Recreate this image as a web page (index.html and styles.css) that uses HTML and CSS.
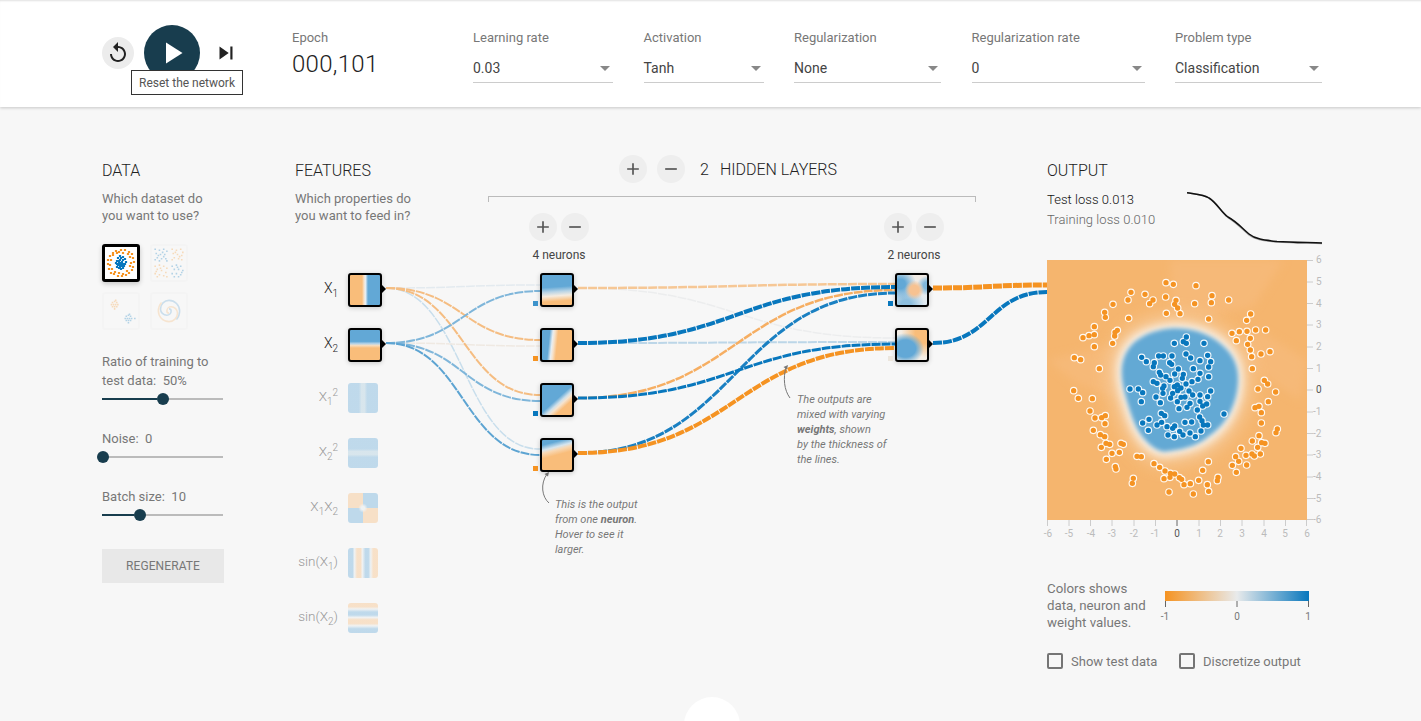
FILE: index.html
```html
<!DOCTYPE html>
<html lang="en">
<head>
<meta charset="utf-8">
<title>Neural network playground</title>
<link rel="stylesheet" href="styles.css">
</head>
<body>
<header class="top">
  <div class="controls">
    <button class="btn-reset" aria-label="Reset"><svg viewBox="0 0 24 24" width="24" height="24"><path d="M12 5V1L7 6l5 5V7c3.31 0 6 2.69 6 6s-2.69 6-6 6-6-2.69-6-6H4c0 4.42 3.58 8 8 8s8-3.58 8-8-3.58-8-8-8z"/></svg></button>
    <button class="btn-play" aria-label="Play"><svg viewBox="0 0 24 24" width="36" height="36"><path d="M8 5v14l11-7z"/></svg></button>
    <button class="btn-step" aria-label="Step"><svg viewBox="0 0 24 24" width="26" height="26"><path d="M6 18l8.5-6L6 6v12zM16 6v12h2V6h-2z"/></svg></button>
    <div class="tooltip">Reset the network</div>
  </div>
  <div class="epoch"><div class="label">Epoch</div><div class="epoch-value">000,101</div></div>
  <div class="fields">
    <div class="field f-lr"><div class="label">Learning rate</div><div class="select">0.03</div></div>
    <div class="field f-ac"><div class="label">Activation</div><div class="select">Tanh</div></div>
    <div class="field f-re"><div class="label">Regularization</div><div class="select">None</div></div>
    <div class="field f-rr"><div class="label">Regularization rate</div><div class="select">0</div></div>
    <div class="field f-re"><div class="label">Problem type</div><div class="select">Classification</div></div>
  </div>
</header>

<main class="main">
  <svg class="links" viewBox="0 0 1421 721" width="1421" height="721" fill="none">
    <g class="dash">
      <path d="M386 288C463 288 463 285 540 285" stroke="#e3eaef" stroke-width="1.5"/>
      <path d="M386 288C463 288 463 450 540 449" stroke="#c8deec" stroke-width="1.5"/>
      <path d="M386 343C463 343 463 346 540 346" stroke="#efe9e2" stroke-width="1.5"/>
      <path d="M386 288C463 288 463 340 540 340" stroke="#f5bd82" stroke-width="2"/>
      <path d="M386 288C463 288 463 395 540 395" stroke="#f5bd82" stroke-width="2"/>
      <path d="M386 343C463 343 463 291 540 291" stroke="#7fb6da" stroke-width="2"/>
      <path d="M386 343C463 343 463 401 540 401" stroke="#7fb6da" stroke-width="2"/>
      <path d="M386 343C463 343 463 455 540 455" stroke="#5da4d2" stroke-width="2"/>
      <path d="M578 288C736 288 736 338 895 338" stroke="#ecedee" stroke-width="1.5"/>
      <path d="M578 288C736 288 736 284 895 284" stroke="#f6c795" stroke-width="2.5"/>
      <path d="M578 343C736 343 736 342 895 342" stroke="#bcd6e8" stroke-width="2"/>
      <path d="M578 398C736 398 736 290 895 290" stroke="#f6ae62" stroke-width="2.5"/>
      <path d="M578 453C736 453 736 293 895 293" stroke="#1a80c2" stroke-width="3"/>
      <path d="M578 343C736 343 736 287 895 287" stroke="#0877bd" stroke-width="4"/>
      <path d="M578 398C736 398 736 344 895 344" stroke="#0877bd" stroke-width="3"/>
      <path d="M578 453C736 453 736 348 895 348" stroke="#f59322" stroke-width="4"/>
      <path d="M933 288C990 288 990 285 1047 285" stroke="#f59322" stroke-width="5"/>
      <path d="M933 343C990 343 990 292 1047 292" stroke="#0877bd" stroke-width="4"/>
    </g>
    <path class="note-line" d="M549 503C542 497 540 484 547 474"/>
    <path class="note-head" d="M549 472l-4.500 2 3.500 2.500z"/>
    <path class="note-line" d="M790 398C784 390 783 378 786 367"/>
    <path class="note-head" d="M788 365l-4.500 2 3.500 2.500z"/>
  </svg>

  <section class="col col-data">
    <h4>DATA</h4>
    <p class="sub">Which dataset do<br>you want to use?</p>
    <div class="thumbs">
      <div class="thumb selected"><svg viewBox="0 0 32 32">
        <path class="pt o" d="M16 3h0M20 3h0M24 5h0M27 7h0M28 11h0M29 15h0M28 20h0M27 23h0M24 26h0M21 28h0M17 29h0M13 29h0M9 27h0M6 26h0M4 22h0M3 17h0M3 13h0M5 9h0M8 6h0M11 4h0M14 5h0M18 6h0M23 7h0M25 10h0M26 16h0M25 19h0M22 24h0M18 27h0M14 26h0M10 25h0M7 22h0M5 18h0M6 13h0M8 8h0M12 6h0"/>
        <path class="pt b" d="M15 9h0M18 10h0M13 11h0M16 11h0M20 12h0M12 14h0M15 13h0M18 13h0M21 15h0M11 16h0M14 16h0M17 15h0M20 17h0M13 18h0M16 18h0M19 19h0M12 20h0M15 20h0M18 21h0M16 22h0M14 14h0M16 16h0M15 18h0M18 17h0M17 19h0M14 21h0M12 17h0"/>
      </svg></div>
      <div class="thumb"><svg viewBox="0 0 32 32">
        <path class="pt b" d="M3 3h0M7 4h0M11 3h0M14 5h0M4 7h0M8 8h0M12 8h0M5 11h0M9 12h0M13 12h0M3 13h0M7 14h0M14 14h0M10 6h0M6 9h0M11 10h0M19 19h0M23 18h0M27 19h0M21 22h0M25 22h0M29 23h0M19 26h0M23 26h0M27 27h0M21 29h0M25 29h0M24 20h0M28 25h0"/>
        <path class="pt o" d="M19 3h0M23 4h0M27 3h0M29 6h0M20 7h0M24 8h0M28 9h0M21 11h0M25 12h0M19 13h0M28 13h0M22 6h0M26 10h0M3 19h0M7 18h0M11 19h0M14 21h0M5 22h0M9 23h0M13 25h0M3 26h0M7 27h0M11 28h0M5 29h0M14 29h0M8 21h0M4 24h0"/>
      </svg></div>
      <div class="thumb"><svg viewBox="0 0 32 32">
        <path class="pt o" d="M8 8h0M10 7h0M12 8h0M7 10h0M9 10h0M11 10h0M13 10h0M8 12h0M10 12h0M12 12h0M10 14h0M11 6h0"/>
        <path class="pt b" d="M21 21h0M23 20h0M25 21h0M20 23h0M22 23h0M24 23h0M26 23h0M21 25h0M23 25h0M25 25h0M23 27h0M24 19h0M29 23h0"/>
      </svg></div>
      <div class="thumb"><svg viewBox="0 0 32 32" fill="none">
        <path class="spiral-b" d="M16 14a2 2 0 0 1 2 2a4 4 0 0 1-4 4a6 6 0 0 1-6-6a8 8 0 0 1 8-8a10 10 0 0 1 10 10a12 12 0 0 1-3 8"/>
        <path class="spiral-o" d="M16 18a2 2 0 0 1-2-2a4 4 0 0 1 4-4a6 6 0 0 1 6 6a8 8 0 0 1-8 8a10 10 0 0 1-10-10a12 12 0 0 1 3-8"/>
      </svg></div>
    </div>
    <div class="ctl ctl-ratio"><div class="ctl-label">Ratio of training to<br>test data:&nbsp; 50%</div><div class="slider s50"><i></i></div></div>
    <div class="ctl"><div class="ctl-label">Noise:&nbsp; 0</div><div class="slider s0"><i></i></div></div>
    <div class="ctl"><div class="ctl-label">Batch size:&nbsp; 10</div><div class="slider s31"><i></i></div></div>
    <button class="regen">REGENERATE</button>
  </section>

  <section class="col col-features">
    <h4>FEATURES</h4>
    <p class="sub">Which properties do<br>you want to feed in?</p>
    <div class="feature on"><span class="fname">X<sub>1</sub></span><div class="node h-x1"></div></div>
    <div class="feature on"><span class="fname">X<sub>2</sub></span><div class="node h-x2"></div></div>
    <div class="feature"><span class="fname">X<sub>1</sub><sup>2</sup></span><div class="fbox h-x1s"></div></div>
    <div class="feature"><span class="fname">X<sub>2</sub><sup>2</sup></span><div class="fbox h-x2s"></div></div>
    <div class="feature"><span class="fname">X<sub>1</sub>X<sub>2</sub></span><div class="fbox h-xx"></div></div>
    <div class="feature"><span class="fname">sin(X<sub>1</sub>)</span><div class="fbox h-s1"></div></div>
    <div class="feature"><span class="fname">sin(X<sub>2</sub>)</span><div class="fbox h-s2"></div></div>
  </section>

  <section class="col col-net">
    <div class="net-head">
      <button class="round" aria-label="Add layer"><svg viewBox="0 0 24 24"><path d="M19 13h-6v6h-2v-6H5v-2h6V5h2v6h6v2z"/></svg></button>
      <button class="round" aria-label="Remove layer"><svg viewBox="0 0 24 24"><path d="M19 13H5v-2h14v2z"/></svg></button>
      <span class="layer-count">2</span><span class="layer-title">HIDDEN LAYERS</span>
    </div>
    <div class="bracket"></div>
    <div class="layers">
      <div class="layer">
        <div class="layer-btns">
          <button class="round" aria-label="Add neuron"><svg viewBox="0 0 24 24"><path d="M19 13h-6v6h-2v-6H5v-2h6V5h2v6h6v2z"/></svg></button>
          <button class="round" aria-label="Remove neuron"><svg viewBox="0 0 24 24"><path d="M19 13H5v-2h14v2z"/></svg></button>
        </div>
        <div class="layer-size">4 neurons</div>
        <div class="node h-n1 bias-b1"></div>
        <div class="node h-n2 bias-o"></div>
        <div class="node h-n3 bias-b"></div>
        <div class="node h-n4 bias-o"></div>
      </div>
      <div class="layer">
        <div class="layer-btns">
          <button class="round" aria-label="Add neuron"><svg viewBox="0 0 24 24"><path d="M19 13h-6v6h-2v-6H5v-2h6V5h2v6h6v2z"/></svg></button>
          <button class="round" aria-label="Remove neuron"><svg viewBox="0 0 24 24"><path d="M19 13H5v-2h14v2z"/></svg></button>
        </div>
        <div class="layer-size">2 neurons</div>
        <div class="node h-n5 bias-b"></div>
        <div class="node h-n6 bias-g"></div>
      </div>
    </div>
    <p class="note note-neuron">This is the output<br>from one <b>neuron</b>.<br>Hover to see it<br>larger.</p>
    <p class="note note-weights">The outputs are<br>mixed with varying<br><b>weights</b>, shown<br>by the thickness of<br>the lines.</p>
  </section>

  <section class="col col-out">
    <h4>OUTPUT</h4>
    <div class="loss">
      <div class="loss-text"><div class="test">Test loss 0.013</div><div class="train">Training loss 0.010</div></div>
      <svg class="chart" viewBox="0 0 135 55" width="135" height="55" fill="none"><path class="chart-b" d="M0 2.700C8 4 17 4.500 22 8C30 13 34 22 41 27.500C50 33 55 39 62 45C68 50 76 50.500 90 52C105 53 120 53 135 53.500"/><path class="chart-a" d="M0 2.700C8 4 17 4.500 22 8C30 13 34 22 41 27C50 32 55 38 62 44C68 49 76 50 90 51.500C105 52.500 120 52.500 135 53"/></svg>
    </div>
    <svg class="plot" viewBox="0 0 280 280" width="280" height="280">
      <defs>
        <filter id="soft" x="-20%" y="-20%" width="140%" height="140%"><feGaussianBlur stdDeviation="7"/></filter>
        <filter id="halo" x="-30%" y="-30%" width="160%" height="160%"><feGaussianBlur stdDeviation="12"/></filter>
        <filter id="wide" x="-50%" y="-50%" width="200%" height="200%"><feGaussianBlur stdDeviation="26"/></filter>
        <filter id="faint" x="-20%" y="-20%" width="140%" height="140%"><feGaussianBlur stdDeviation="12"/></filter>
        <clipPath id="plotclip"><rect width="260" height="260"/></clipPath>
      </defs>
      <g clip-path="url(#plotclip)">
        <rect class="plot-bg" width="260" height="260"/>
        <g transform="scale(.33333) translate(-21 0)">
          <g filter="url(#faint)">
            <path class="plot-light" d="M390 0H730L640 140L500 170H400z"/>
            <path class="plot-light" d="M21 300L240 250V420L110 370z"/>
            <path class="plot-light" d="M600 300L780 420L800 300L640 200z"/>
          </g>
          <path class="blob-wide" filter="url(#wide)" d="M410 200C470 200 530 225 565 265C600 305 605 350 595 400C585 450 560 500 510 535C470 565 420 575 370 580C330 575 290 530 270 470C255 420 240 380 240 335C240 290 260 245 310 222C340 208 375 200 410 200Z"/>
          <path class="blob-halo" filter="url(#halo)" d="M410 200C470 200 530 225 565 265C600 305 605 350 595 400C585 450 560 500 510 535C470 565 420 575 370 580C330 575 290 530 270 470C255 420 240 380 240 335C240 290 260 245 310 222C340 208 375 200 410 200Z"/>
          <path class="blob" filter="url(#soft)" d="M410 205C470 205 525 230 560 268C595 305 600 350 590 400C580 450 555 497 505 530C470 560 420 570 372 575C335 570 295 527 275 468C260 420 245 380 245 335C245 292 265 250 312 227C340 213 375 205 410 205Z"/>
          <path class="d-ring" d="M378 68h0M400 73h0M468 77h0M273 97h0M264 120h0M315 103h0M339 120h0M329 131h0M377 111h0M408 121h0M404 133h0M413 144h0M420 161h0M464 131h0M514 128h0M516 107h0M566 120h0M219 133h0M194 157h0M196 172h0M266 175h0M379 160h0M506 177h0M632 162h0M620 181h0M163 200h0M147 227h0M129 233h0M163 224h0M163 260h0M232 211h0M225 217h0M224 228h0M218 250h0M576 220h0M598 215h0M621 214h0M647 210h0M677 210h0M631 235h0M589 242h0M623 253h0M631 270h0M635 290h0M663 282h0M690 275h0M103 293h0M122 299h0M178 326h0M637 326h0M673 361h0M683 372h0M707 396h0M654 387h0M685 425h0M657 439h0M645 443h0M664 458h0M664 489h0M101 392h0M115 415h0M157 416h0M150 453h0M165 474h0M185 473h0M196 467h0M195 491h0M160 511h0M181 524h0M194 530h0M198 550h0M209 553h0M184 562h0M243 550h0M250 553h0M238 577h0M216 580h0M199 598h0M226 620h0M228 627h0M291 589h0M304 590h0M342 611h0M359 622h0M375 633h0M391 640h0M404 642h0M390 652h0M372 656h0M418 653h0M425 658h0M432 674h0M451 671h0M476 661h0M488 631h0M505 605h0M502 674h0M534 652h0M532 662h0M506 694h0M460 702h0M387 696h0M280 655h0M277 670h0M577 616h0M587 590h0M596 604h0M603 565h0M618 586h0M620 615h0M589 637h0M636 582h0M643 588h0M661 582h0M653 562h0M637 543h0M665 548h0M675 550h0M657 527h0M708 518h0M712 507h0"/>
          <path class="d-o" d="M378 68h0M400 73h0M468 77h0M273 97h0M264 120h0M315 103h0M339 120h0M329 131h0M377 111h0M408 121h0M404 133h0M413 144h0M420 161h0M464 131h0M514 128h0M516 107h0M566 120h0M219 133h0M194 157h0M196 172h0M266 175h0M379 160h0M506 177h0M632 162h0M620 181h0M163 200h0M147 227h0M129 233h0M163 224h0M163 260h0M232 211h0M225 217h0M224 228h0M218 250h0M576 220h0M598 215h0M621 214h0M647 210h0M677 210h0M631 235h0M589 242h0M623 253h0M631 270h0M635 290h0M663 282h0M690 275h0M103 293h0M122 299h0M178 326h0M637 326h0M673 361h0M683 372h0M707 396h0M654 387h0M685 425h0M657 439h0M645 443h0M664 458h0M664 489h0M101 392h0M115 415h0M157 416h0M150 453h0M165 474h0M185 473h0M196 467h0M195 491h0M160 511h0M181 524h0M194 530h0M198 550h0M209 553h0M184 562h0M243 550h0M250 553h0M238 577h0M216 580h0M199 598h0M226 620h0M228 627h0M291 589h0M304 590h0M342 611h0M359 622h0M375 633h0M391 640h0M404 642h0M390 652h0M372 656h0M418 653h0M425 658h0M432 674h0M451 671h0M476 661h0M488 631h0M505 605h0M502 674h0M534 652h0M532 662h0M506 694h0M460 702h0M387 696h0M280 655h0M277 670h0M577 616h0M587 590h0M596 604h0M603 565h0M618 586h0M620 615h0M589 637h0M636 582h0M643 588h0M661 582h0M653 562h0M637 543h0M665 548h0M675 550h0M657 527h0M708 518h0M712 507h0"/>
          <path class="d-ring" d="M439 231h0M430 245h0M439 250h0M403 250h0M492 250h0M305 292h0M319 305h0M343 308h0M340 320h0M356 288h0M370 288h0M396 288h0M389 308h0M395 313h0M438 282h0M452 294h0M480 302h0M503 286h0M512 305h0M506 321h0M460 326h0M415 327h0M358 337h0M404 342h0M430 343h0M480 340h0M506 350h0M340 365h0M351 370h0M378 350h0M362 345h0M390 361h0M427 355h0M456 365h0M474 358h0M438 372h0M372 378h0M368 385h0M403 380h0M412 375h0M423 384h0M398 400h0M413 392h0M447 393h0M512 393h0M270 387h0M295 387h0M308 398h0M304 425h0M348 411h0M361 428h0M369 400h0M392 414h0M412 425h0M423 412h0M435 411h0M458 405h0M480 405h0M503 410h0M480 424h0M500 432h0M488 438h0M450 430h0M441 442h0M417 446h0M472 450h0M552 462h0M364 460h0M374 467h0M479 471h0M486 482h0M308 489h0M327 478h0M351 495h0M365 487h0M381 500h0M398 505h0M404 498h0M435 487h0M455 486h0M490 495h0M503 495h0M483 513h0M325 511h0M384 525h0M403 530h0M419 514h0M429 525h0M450 519h0M466 530h0"/>
          <path class="d-b" d="M439 231h0M430 245h0M439 250h0M403 250h0M492 250h0M305 292h0M319 305h0M343 308h0M340 320h0M356 288h0M370 288h0M396 288h0M389 308h0M395 313h0M438 282h0M452 294h0M480 302h0M503 286h0M512 305h0M506 321h0M460 326h0M415 327h0M358 337h0M404 342h0M430 343h0M480 340h0M506 350h0M340 365h0M351 370h0M378 350h0M362 345h0M390 361h0M427 355h0M456 365h0M474 358h0M438 372h0M372 378h0M368 385h0M403 380h0M412 375h0M423 384h0M398 400h0M413 392h0M447 393h0M512 393h0M270 387h0M295 387h0M308 398h0M304 425h0M348 411h0M361 428h0M369 400h0M392 414h0M412 425h0M423 412h0M435 411h0M458 405h0M480 405h0M503 410h0M480 424h0M500 432h0M488 438h0M450 430h0M441 442h0M417 446h0M472 450h0M552 462h0M364 460h0M374 467h0M479 471h0M486 482h0M308 489h0M327 478h0M351 495h0M365 487h0M381 500h0M398 505h0M404 498h0M435 487h0M455 486h0M490 495h0M503 495h0M483 513h0M325 511h0M384 525h0M403 530h0M419 514h0M429 525h0M450 519h0M466 530h0"/>
        </g>
      </g>
      <path class="ticks" d="M260 .500h6M260 22h6M260 43.500h6M260 65h6M260 87h6M260 108.500h6M260 130h6M260 152h6M260 173.500h6M260 195h6M260 217h6M260 238.500h6M260 259.500h6"/>
      <path class="ticks" d="M.500 260v6M22 260v6M43.500 260v6M65 260v6M87 260v6M108.500 260v6M152 260v6M173.500 260v6M195 260v6M217 260v6M238.500 260v6M259.500 260v6"/>
      <path class="tick0" d="M130 260v6"/>
      <g class="ax ax-r">
        <text x="269" y="3">6</text><text x="269" y="25">5</text><text x="269" y="47">4</text><text x="269" y="68">3</text><text x="269" y="90">2</text><text x="269" y="112">1</text><text class="ax0" x="269" y="133">0</text><text x="266" y="155">-1</text><text x="266" y="177">-2</text><text x="266" y="198">-3</text><text x="266" y="220">-4</text><text x="266" y="242">-5</text><text x="266" y="263">-6</text>
      </g>
      <g class="ax ax-b">
        <text x="1" y="277">-6</text><text x="22" y="277">-5</text><text x="44" y="277">-4</text><text x="65" y="277">-3</text><text x="87" y="277">-2</text><text x="108" y="277">-1</text><text class="ax0" x="130" y="277">0</text><text x="152" y="277">1</text><text x="173" y="277">2</text><text x="195" y="277">3</text><text x="217" y="277">4</text><text x="238" y="277">5</text><text x="260" y="277">6</text>
      </g>
    </svg>
    <div class="legend">
      <p class="legend-text">Colors shows<br>data, neuron and<br>weight values.</p>
      <svg class="scale" viewBox="0 0 150 32" width="150" height="32">
        <defs><linearGradient id="cs"><stop offset="0" stop-color="#f59322"/><stop offset=".5" stop-color="#e8eaeb"/><stop offset="1" stop-color="#0877bd"/></linearGradient></defs>
        <rect x="0" width="144" height="10" fill="url(#cs)"/>
        <path class="tick0" d="M.500 10v6M72 10v6M143.500 10v6"/>
        <text class="scale-t" x="0" y="29" text-anchor="middle">-1</text><text class="scale-t" x="72" y="29" text-anchor="middle">0</text><text class="scale-t" x="143" y="29" text-anchor="middle">1</text>
      </svg>
    </div>
    <div class="checks">
      <label class="check c-show"><span class="box"></span>Show test data</label>
      <label class="check"><span class="box"></span>Discretize output</label>
    </div>
  </section>
</main>
<div class="more"></div>
</body>
</html>
```
FILE: styles.css
```css
* { box-sizing: border-box; }
html, body { margin: 0; height: 721px; overflow: hidden; }
body { background: #f7f7f7; font-family: Roboto, "Liberation Sans", sans-serif; color: #777; font-size: 14px; position: relative; }
button { border: 0; padding: 0; font-family: inherit; cursor: pointer; }

.top { height: 107px; background: #fff; display: flex; padding: 25px 0 0 102px; box-shadow: 0 1px 3px rgba(0,0,0,.2), inset 0 2px 2px -1px rgba(0,0,0,.12); position: relative; z-index: 2; }
.controls { width: 190px; height: 56px; display: flex; align-items: center; position: relative; }
.btn-reset { width: 32px; height: 32px; border-radius: 50%; background: #ececec; display: flex; align-items: center; justify-content: center; }
.btn-reset path { fill: #222; }
.btn-play { width: 56px; height: 56px; border-radius: 50%; background: #183d4e; margin-left: 10px; display: flex; align-items: center; justify-content: center; }
.btn-play path { fill: #fff; }
.btn-step { background: none; margin-left: 13px; width: 26px; height: 26px; }
.btn-step path { fill: #222; }
.tooltip { position: absolute; left: 29px; top: 45px; width: 112px; height: 25px; background: #fff; border: 1px solid #333; font-size: 12px; line-height: 24px; text-align: center; color: #555; }
.epoch { width: 181px; margin-top: 5px; }
.label { font-size: 13px; line-height: 16px; color: #777; }
.epoch-value { font-size: 24px; font-weight: 300; line-height: 28px; margin-top: 4px; color: #222; letter-spacing: .3px; }
.fields { display: flex; gap: 30.500px; margin-top: 5px; }
.f-lr { width: 140px; } .f-ac { width: 120px; } .f-re { width: 147px; } .f-rr { width: 173px; }
.select { margin-top: 14px; height: 23px; line-height: 16px; font-size: 14px; color: #444; border-bottom: 1px solid #ccc; position: relative; }
.select::after { content: ""; position: absolute; right: 3px; top: 6px; border: 5.500px solid transparent; border-top: 5px solid #888; border-bottom: 0; }

.main { display: flex; padding-left: 102px; position: relative; }
.links { position: absolute; left: 0; top: -107px; pointer-events: none; }
.dash path { stroke-dasharray: 9 1; }
.note-line { stroke: #777; stroke-width: 1; }
.note-head { fill: #777; }
.col { padding-top: 54px; position: relative; }
h4 { margin: 0; font-size: 16px; font-weight: 300; line-height: 20px; color: #222; }
.sub { margin: 9px 0 0; font-size: 13px; line-height: 17px; color: #777; }

.col-data { width: 193px; }
.thumbs { margin-top: 20px; display: grid; grid-template-columns: 38px 38px; gap: 10px; }
.thumb { width: 38px; height: 38px; border: 2px solid #efefef; border-radius: 3px; opacity: .28; }
.thumb svg { display: block; width: 100%; height: 100%; }
.thumb.selected { opacity: 1; border: 3px solid #000; background: #fff; box-shadow: 0 2px 5px rgba(0,0,0,.2); }
.pt { fill: none; stroke-width: 1.500; stroke-linecap: square; }
.selected .pt { stroke-width: 2.200; }
.pt.o { stroke: #f59322; } .pt.b { stroke: #0877bd; }
.spiral-b, .spiral-o { stroke-width: 1.500; }
.spiral-b { stroke: #5b9fd0; } .spiral-o { stroke: #f5b56e; }
.ctl { margin-top: 29px; width: 121px; }
.ctl-ratio { margin-top: 22px; }
.ctl-label { font-size: 13px; line-height: 19px; color: #777; }
.slider { height: 2px; background: #bbb; margin-top: 8px; position: relative; }
.slider i { position: absolute; top: -5px; width: 12px; height: 12px; border-radius: 50%; background: #183d4e; }
.slider::before { content: ""; position: absolute; left: 0; top: 0; height: 2px; background: #183d4e; }
.s50 i { left: 55px; } .s50::before { width: 55px; }
.s0 i { left: -5px; }
.s31 i { left: 32px; } .s31::before { width: 32px; }
.regen { display: block; margin-top: 33px; width: 122px; height: 34px; background: #e8e8e8; color: #777; font-size: 12px; letter-spacing: .1px; }

.col-features { width: 193px; }
.feature { display: flex; height: 34px; margin-bottom: 21px; gap: 10px; }
.col-features .sub { margin-bottom: 49px; }
.fname { width: 43px; margin-top: -2px; text-align: right; font-size: 13.500px; font-weight: 300; line-height: 30px; color: #999; white-space: nowrap; }
.feature.on .fname { color: #222; line-height: 34px; font-size: 14px; }
.fname sub, .fname sup { font-size: 10px; line-height: 0; }
.fbox { width: 30px; height: 30px; border-radius: 3px; opacity: .38; }

.node { width: 34px; height: 34px; border: 2px solid #000; border-radius: 3px; box-shadow: 0 1px 5px rgba(0,0,0,.2); position: relative; background-color: #fff; }
.node::after { content: ""; position: absolute; left: 31px; top: 9px; border: 5px solid transparent; border-left: 5px solid #000; border-right: 0; }
.bias-o::before, .bias-b::before, .bias-b1::before, .bias-g::before { content: ""; position: absolute; left: -9px; top: 26px; width: 5px; height: 5px; }
.bias-o::before { background: #f59322; } .bias-b::before { background: #0877bd; } .bias-b1::before { background: #3d93cb; } .bias-g::before { background: #ece6dd; }

.h-x1 { background-image: linear-gradient(90deg, #f9bd7a 0 40%, #f9e4cd 47%, #e4eef5 52%, #62a8d6 60%); }
.h-x2 { background-image: linear-gradient(180deg, #62a8d6 0 38%, #b9d5e8 46%, #f8dcbc 52%, #f9bd7a 60%); }
.h-x1s { background-image: linear-gradient(90deg, #64a9d8 0 36%, #a5c9dc 45% 55%, #64a9d8 64%); }
.h-x2s { background-image: linear-gradient(180deg, #64a9d8 0 36%, #a5c9dc 45% 55%, #64a9d8 64%); }
.h-xx { background-image: radial-gradient(circle, #e4eaec 0 8%, rgba(228,234,236,0) 22%), conic-gradient(#64a9d8 0 25%, #f8bc7c 25% 50%, #64a9d8 50% 75%, #f8bc7c 75%); }
.h-s1 { background-image: linear-gradient(90deg, #64a9d8 0 15%, #e4eaec 22%, #f8bc7c 30% 42%, #e4eaec 48%, #64a9d8 58% 68%, #e4eaec 76%, #f8bc7c 84%); }
.h-s2 { background-image: linear-gradient(180deg, #f8bc7c 0 12%, #e4eaec 20%, #64a9d8 30% 40%, #e4eaec 48%, #f8bc7c 56% 68%, #e4eaec 76%, #64a9d8 86%); }
.h-n1 { background-image: linear-gradient(176deg, #62a8d6 0 40%, #b8d4e6 55%, #f5ece0 68%, #f9bd7a 85%); }
.h-n2 { background-image: linear-gradient(96deg, #62a8d6 0 24%, #e8eef2 34%, #f6e2cb 40%, #f9bd7a 50%); }
.h-n3 { background-image: linear-gradient(138deg, #62a8d6 0 48%, #cfe0ea 58%, #f5e4d0 64%, #f9bd7a 74%); }
.h-n4 { background-image: linear-gradient(165deg, #62a8d6 0 14%, #d6e5ef 28%, #f8d8b4 36%, #f9bd7a 50%); }
.h-n5 { background-image: radial-gradient(circle at 58% 50%, #f7c291 0 20%, rgba(247,214,180,0) 42%), radial-gradient(circle at 12% 30%, #62a8d6 0 14%, rgba(98,168,214,0) 46%), radial-gradient(circle at 100% 35%, #7fb6da 0 10%, rgba(98,168,214,0) 28%), radial-gradient(circle at 30% 100%, #8dbedd 0 14%, rgba(98,168,214,0) 50%), linear-gradient(#f2ebe4, #dfeaf2); }
.h-n6 { background-image: radial-gradient(ellipse 62% 52% at 28% 62%, #62a8d6 0 55%, rgba(98,168,214,0) 100%), radial-gradient(circle at 95% 10%, #f9bd7a 0 26%, rgba(249,189,122,0) 62%), linear-gradient(#f3ede5, #f3ede5); }

.col-net { width: 559px; }
.net-head { display: flex; align-items: center; height: 28px; margin-top: -6px; padding-left: 131px; gap: 10px; }
.round { width: 28px; height: 28px; border-radius: 50%; background: #eee; display: flex; align-items: center; justify-content: center; }
.round svg { width: 20px; height: 20px; }
.round path { fill: #555; }
.layer-count { font-size: 16px; font-weight: 300; color: #222; margin-left: 5px; }
.layer-title { font-size: 16px; font-weight: 300; color: #222; margin-left: 1px; }
.bracket { width: 488px; height: 6px; border: 1px solid #bbb; border-bottom: 0; margin-top: 13px; }
.layers { display: flex; gap: 245px; padding-left: 14px; margin-top: 11px; }
.layer { width: 110px; display: flex; flex-direction: column; align-items: center; gap: 21px; }
.layer-btns { display: flex; gap: 4px; margin-left: 4px; height: 28px; }
.layer-size { font-size: 12px; line-height: 14px; color: #444; margin: -14px 0 -10px 4px; }
.note { position: absolute; margin: 0; font-size: 11px; font-style: italic; line-height: 15px; color: #777; }
.note b { font-weight: 700; }
.note-neuron { left: 67px; top: 390px; white-space: nowrap; }
.note-weights { left: 309px; top: 285px; white-space: nowrap; }

.col-out { width: 275px; }
.loss { display: flex; justify-content: space-between; margin-top: 9px; height: 70px; }
.loss-text { font-size: 13px; line-height: 20px; font-weight: 300; letter-spacing: .05px; }
.test { color: #111; } .train { color: #666; }
.chart-a { stroke: #111; stroke-width: 1.500; } .chart-b { stroke: #aaa; stroke-width: 1.500; }
.plot { display: block; overflow: visible; }
.plot-bg { fill: #f5b56e; }
.plot-light { fill: #f6b978; }
.blob-wide { fill: none; stroke: #f8d5ae; stroke-width: 70; opacity: .7; }
.blob-halo { fill: #f8f3ec; stroke: #f8f3ec; stroke-width: 18; }
.blob { fill: #64a9d4; }
.d-ring { fill: none; stroke: #fff; stroke-width: 23; stroke-linecap: round; opacity: .9; }
.d-o { fill: none; stroke: #f59322; stroke-width: 16; stroke-linecap: round; }
.d-b { fill: none; stroke: #0877bd; stroke-width: 16; stroke-linecap: round; }
.ticks { stroke: #ccc; fill: none; }
.tick0 { stroke: #666; fill: none; }
.ax { font-size: 10px; fill: #bbb; }
.ax-b { text-anchor: middle; }
.ax0 { fill: #555; }
.legend { display: flex; margin-top: 40px; }
.legend-text { width: 118px; margin: 0; font-size: 13.300px; line-height: 17px; color: #777; }
.scale { margin-top: 11px; overflow: visible; }
.scale-t { font-size: 10px; fill: #777; }
.checks { display: flex; margin-top: 22px; }
.check { display: flex; align-items: center; gap: 8px; height: 16px; font-size: 13px; color: #777; }
.c-show { width: 132px; }
.box { width: 16px; height: 16px; border: 2px solid #757575; border-radius: 2px; }
.more { position: absolute; left: 684px; top: 697px; width: 56px; height: 56px; border-radius: 50%; background: #fff; }
```
